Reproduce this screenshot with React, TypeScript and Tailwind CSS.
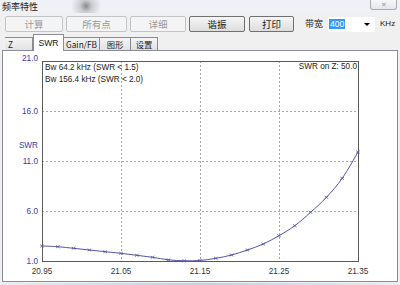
import React from 'react';

const swr = [2.5, 2.43, 2.27, 2.1, 1.93, 1.77, 1.57, 1.37, 1.12, 1.02, 1.05, 1.27, 1.6, 2.1, 2.7, 3.53, 4.53, 5.87, 7.37, 9.27, 11.9];

const px = (i: number) => 42 + i * 15.8;
const py = (s: number) => 261 - (s - 1) * 10;

// catmull-rom -> bezier so the curve reads smooth like the original
function curvePath() {
  const pts = swr.map((s, i) => [px(i), py(s)]);
  let d = `M${pts[0][0]},${pts[0][1]}`;
  for (let i = 0; i < pts.length - 1; i++) {
    const p0 = pts[i - 1] || pts[i];
    const p1 = pts[i];
    const p2 = pts[i + 1];
    const p3 = pts[i + 2] || p2;
    const c1x = p1[0] + (p2[0] - p0[0]) / 6;
    const c1y = p1[1] + (p2[1] - p0[1]) / 6;
    const c2x = p2[0] - (p3[0] - p1[0]) / 6;
    const c2y = p2[1] - (p3[1] - p1[1]) / 6;
    d += ` C${c1x.toFixed(1)},${c1y.toFixed(1)} ${c2x.toFixed(1)},${c2y.toFixed(1)} ${p2[0].toFixed(1)},${p2[1].toFixed(1)}`;
  }
  return d;
}

const yTicks = [
  { label: '21.0', base: 61 },
  { label: '16.0', base: 114 },
  { label: '11.0', base: 164 },
  { label: '6.0', base: 214 },
  { label: '1.0', base: 264 },
];
const xTicks = [
  { label: '20.95', x: 42 },
  { label: '21.05', x: 121 },
  { label: '21.15', x: 200 },
  { label: '21.25', x: 279 },
  { label: '21.35', x: 358 },
];

function SwrChart() {
  const line = '#5555a5';
  return (
    <svg width={394} height={230} viewBox="3 51 394 230" className="block">
      {[111, 161, 211].map(y => (
        <line key={y} x1={42} x2={358} y1={y + 0.5} y2={y + 0.5} stroke="#a8a8a8" strokeDasharray="2 2" />
      ))}
      {[121, 200, 279].map(x => (
        <line key={x} x1={x + 0.5} x2={x + 0.5} y1={61} y2={261} stroke="#a8a8a8" strokeDasharray="2 2" />
      ))}
      <rect x={42.5} y={61.5} width={316} height={200} fill="none" stroke="#5a5a5a" />

      <path d={curvePath()} fill="none" stroke={line} strokeWidth={1} />
      {swr.map((s, i) => {
        const x = px(i);
        const y = py(s);
        return (
          <path key={i} d={`M${x - 1.8},${y - 1.3} L${x + 1.8},${y + 1.3} M${x - 1.8},${y + 1.3} L${x + 1.8},${y - 1.3}`} stroke={line} strokeWidth={0.8} />
        );
      })}

      <g fontFamily="'Liberation Sans', Arial, sans-serif" fontSize={8.2}>
        {yTicks.map(t => (
          <text key={t.label} x={38} y={t.base} textAnchor="end" fill="#3c3caa">{t.label}</text>
        ))}
        <text x={38} y={148} textAnchor="end" fill="#3c3caa">SWR</text>
        {xTicks.map(t => (
          <text key={t.label} x={t.x} y={274} textAnchor="middle" fill="#333">{t.label}</text>
        ))}
        <text x={45} y={70} fill="#222">Bw 64.2 kHz (SWR &lt; 1.5)</text>
        <text x={45} y={82} fill="#222">Bw 156.4 kHz (SWR &lt; 2.0)</text>
        <text x={357} y={69} textAnchor="end" fill="#222">SWR on Z: 50.0</text>
      </g>
    </svg>
  );
}

function ToolButton({ label, w, enabled }: { label: string; w: string; enabled?: boolean }) {
  return (
    <div
      className={
        enabled
          ? `${w} h-[16px] flex items-center justify-center rounded-[2px] border border-[#707070] bg-gradient-to-b from-[#f6f6f6] to-[#dddddd] text-[9.5px] text-[#222]`
          : `${w} h-[16px] flex items-center justify-center rounded-[2px] border border-[#c2c5c8] bg-[#f4f4f4] text-[9.5px] text-[#999]`
      }
    >
      {label}
    </div>
  );
}

function Tab({ label, w, active, left }: { label: string; w: string; active?: boolean; left?: boolean }) {
  return active ? (
    <div className={`${w} h-[17px] -mb-px flex items-center justify-center border border-b-0 border-[#898c95] bg-white text-[8.6px] text-[#111] font-['Liberation_Sans']`}>
      {label}
    </div>
  ) : (
    <div
      className={`${w} h-[13px] flex items-center ${left ? 'justify-start pl-[3px] border-l' : 'justify-center'} border border-b-0 border-l-0 border-[#898c95] bg-gradient-to-b from-[#f4f4f4] to-[#e2e2e2] text-[8.3px] text-[#222]`}
    >
      {label}
    </div>
  );
}

export default function App() {
  return (
    <div className="w-[400px] h-[285px] overflow-hidden flex flex-col bg-[#eef2f6] font-['Noto_Sans_CJK_SC','Liberation_Sans',sans-serif]">
      <div className="h-[13px] flex items-start bg-[radial-gradient(circle_at_86px_6px,#8a8a8a_0px,#c9cdd2_6px,#eef2f6_15px)]">
        <span className="ml-[2px] mt-[1px] text-[9px] leading-[11px] text-[#222]">频率特性</span>
        <div className="ml-auto mr-[3px] w-[27px] h-[10px] flex items-center justify-center rounded-b-[3px] border border-t-0 border-[#a8acb1] bg-gradient-to-b from-[#f6f8fa] to-[#e4e7ea] text-[7px] leading-none text-[#999]">
          ✕
        </div>
      </div>

      <div className="flex-1 flex flex-col bg-[#f0f0f0]">
        <div className="flex items-center pt-[3px] pl-[5px] h-[19px]">
          <ToolButton label="计算" w="w-[58px]" />
          <div className="w-[3px]" />
          <ToolButton label="所有点" w="w-[61px]" />
          <div className="w-[3px]" />
          <ToolButton label="详细" w="w-[56px]" />
          <div className="w-[3px]" />
          <ToolButton label="谐振" w="w-[56px]" enabled />
          <div className="w-[4px]" />
          <ToolButton label="打印" w="w-[45px]" enabled />
          <span className="ml-[11px] text-[9px] text-[#222]">带宽</span>
          <div className="ml-[5px] w-[47px] h-[15px] flex items-center bg-white">
            <span className="ml-[1px] px-px bg-[#3399ff] text-white text-[8.5px] leading-[10px] font-['Liberation_Sans']">400</span>
            <span className="ml-auto mr-[5px] w-0 h-0 border-l-[3px] border-r-[3px] border-t-[3px] border-l-transparent border-r-transparent border-t-black" />
          </div>
          <span className="ml-[5px] text-[8px] text-[#222] font-['Liberation_Sans']">KHz</span>
        </div>

        <div className="flex items-end h-[18px] pl-[5px] relative z-10">
          <Tab label="Z" w="w-[28px]" left />
          <Tab label="SWR" w="w-[31px]" active />
          <Tab label="Gain/FB" w="w-[36px]" />
          <Tab label="图形" w="w-[31px]" />
          <Tab label="设置" w="w-[27px]" />
        </div>

        <div className="mx-[2px] h-[232px] border border-[#898c95] bg-white">
          <SwrChart />
        </div>
        <div className="flex-1" />
        <div className="h-[2px] bg-gradient-to-r from-[#e8eef5] via-[#b9d2ea] to-[#e8eef5]" />
      </div>
    </div>
  );
}
